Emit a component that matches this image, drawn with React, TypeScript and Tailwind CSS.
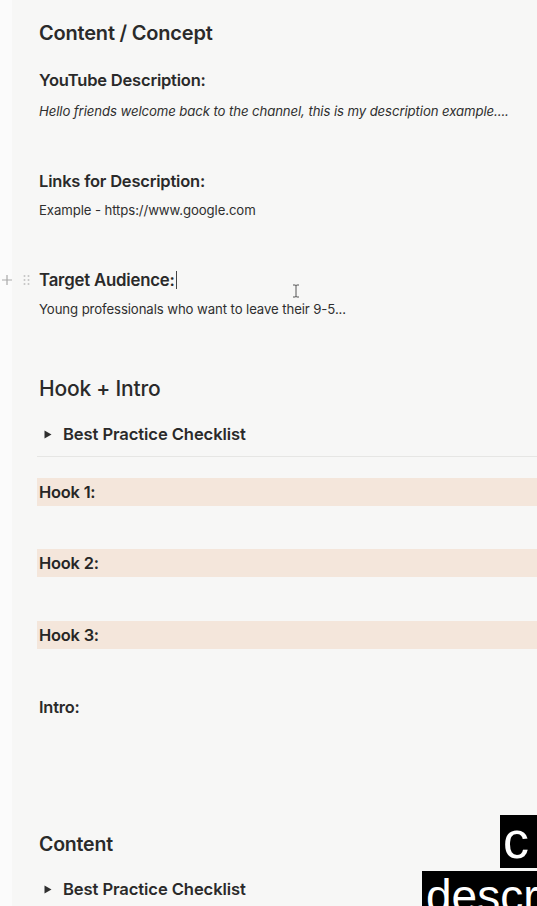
import React from "react";

const font = { fontFamily: "Inter, 'Liberation Sans', sans-serif" };

function Toggle({ className = "" }: { className?: string }) {
  return (
    <div className={`flex items-center h-[26px] ${className}`}>
      <svg width="8" height="9" viewBox="0 0 8 9" className="ml-[5px] mr-[11px]">
        <path d="M0.5 0.5 L7.5 4.5 L0.5 8.5 Z" fill="#2f2f2f" />
      </svg>
      <span className="text-[16.6px] font-semibold leading-[26px] text-[#2a2a2a] tracking-[-0.1px]">
        Best Practice Checklist
      </span>
    </div>
  );
}

function HookBar({ label, className = "" }: { label: string; className?: string }) {
  return (
    <div className={`h-[28px] bg-[#f4e6db] ml-[-2px] pl-[2px] flex items-center ${className}`}>
      <span className="text-[16.4px] font-semibold text-[#262626] tracking-[-0.2px]">{label}</span>
    </div>
  );
}

export default function App() {
  return (
    <div className="relative w-[537px] h-[906px] overflow-hidden flex bg-[#f7f7f6]" style={font}>
      <div className="w-[12px] shrink-0 bg-[#fbfbfb]" />
      <div className="flex-1 flex flex-col pl-[27px] text-[#2a2a2a]">
        <div className="mt-[18px] h-[30px] text-[20px] font-semibold leading-[30px] tracking-[-0.2px]">
          Content / Concept
        </div>
        <div className="mt-[20px] h-[24px] text-[16.5px] font-semibold leading-[24px] tracking-[-0.2px]">
          YouTube Description:
        </div>
        <div className="mt-[8px] h-[22px] text-[13.2px] italic leading-[22px] text-[#2f2f2f] tracking-[-0.1px] whitespace-nowrap">
          Hello friends welcome back to the channel, this is my description example....
        </div>
        <div className="mt-[47px] h-[24px] text-[16.5px] font-semibold leading-[24px] tracking-[-0.2px]">
          Links for Description:
        </div>
        <div className="mt-[6px] h-[22px] text-[13.2px] leading-[22px] text-[#2f2f2f] tracking-[-0.1px]">
          Example - https://www.google.com
        </div>
        <div className="relative mt-[47px] h-[24px] text-[16.8px] font-semibold leading-[24px] tracking-[-0.2px] flex items-center">
          <span>Target Audience:</span>
          <span className="inline-block w-[1px] h-[18px] bg-[#444] ml-[1px]" />
          <div className="absolute left-[-39px] top-0 h-[24px] flex items-center">
            <svg width="12" height="12" viewBox="0 0 12 12" className="ml-[1px]">
              <path d="M6 1 V11 M1 6 H11" stroke="#a9a9a9" strokeWidth="1.2" />
            </svg>
            <svg width="8" height="12" viewBox="0 0 8 12" className="ml-[10px]">
              {[2, 6, 10].map((y) => (
                <g key={y}>
                  <circle cx="1.5" cy={y} r="1" fill="#c4c4c4" />
                  <circle cx="5.5" cy={y} r="1" fill="#c4c4c4" />
                </g>
              ))}
            </svg>
          </div>
          <svg width="8" height="14" viewBox="0 0 8 14" className="absolute left-[253px] top-[16px]">
            <path d="M1 1 H3 Q4 1 4 2 V12 Q4 13 3 13 H1 M7 1 H5 Q4 1 4 2 M4 12 Q4 13 5 13 H7" stroke="#555" strokeWidth="1" fill="none" />
          </svg>
        </div>
        <div className="mt-[6px] h-[22px] text-[13.2px] leading-[22px] text-[#2f2f2f] tracking-[-0.1px]">
          Young professionals who want to leave their 9-5...
        </div>
        <div className="mt-[54px] h-[30px] text-[21px] font-medium leading-[30px] tracking-[-0.2px]">
          Hook + Intro
        </div>
        <Toggle className="mt-[17px]" />
        <div className="mt-[9px] h-[1px] bg-[#e6e6e4] ml-[-2px]" />
        <HookBar label="Hook 1:" className="mt-[21px]" />
        <HookBar label="Hook 2:" className="mt-[43px]" />
        <HookBar label="Hook 3:" className="mt-[44px]" />
        <div className="mt-[46px] h-[24px] text-[16.4px] font-semibold leading-[24px] tracking-[-0.2px]">
          Intro:
        </div>
        <div className="mt-[110px] h-[30px] text-[19.5px] font-semibold leading-[30px] tracking-[-0.2px]">
          Content
        </div>
        <Toggle className="mt-[17px]" />
      </div>
      <div className="absolute right-0 top-[815px] w-[37px] h-[53px] bg-black text-white text-[52px] leading-[50px] pl-[3px] overflow-hidden" style={{ fontFamily: "'Liberation Sans', Arial, sans-serif" }}>
        c
      </div>
      <div className="absolute right-0 top-[871px] w-[115px] h-[35px] bg-black text-white text-[46px] leading-[50px] pl-[4px] overflow-hidden whitespace-nowrap" style={{ fontFamily: "'Liberation Sans', Arial, sans-serif" }}>
        descr
      </div>
    </div>
  );
}
